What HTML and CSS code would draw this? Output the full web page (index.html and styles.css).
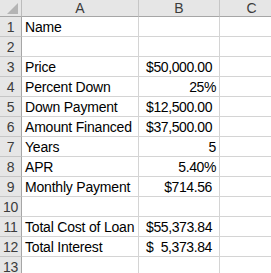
FILE: index.html
```html
<!DOCTYPE html>
<html>
<head>
<meta charset="utf-8">
<link rel="stylesheet" href="styles.css">
</head>
<body>
<div class="sheet">
  <div class="corner"><span class="tri"></span></div>
  <div class="colhdr">A</div>
  <div class="colhdr">B</div>
  <div class="colhdr">C</div>

  <div class="rowhdr">1</div><div class="cell">Name</div><div class="cell"></div><div class="cell"></div>
  <div class="rowhdr">2</div><div class="cell"></div><div class="cell"></div><div class="cell"></div>
  <div class="rowhdr">3</div><div class="cell">Price</div><div class="cell acct"><span>$</span><span>50,000.00</span></div><div class="cell"></div>
  <div class="rowhdr">4</div><div class="cell">Percent Down</div><div class="cell num">25%</div><div class="cell"></div>
  <div class="rowhdr">5</div><div class="cell">Down Payment</div><div class="cell acct"><span>$</span><span>12,500.00</span></div><div class="cell"></div>
  <div class="rowhdr">6</div><div class="cell">Amount Financed</div><div class="cell acct"><span>$</span><span>37,500.00</span></div><div class="cell"></div>
  <div class="rowhdr">7</div><div class="cell">Years</div><div class="cell num">5</div><div class="cell"></div>
  <div class="rowhdr">8</div><div class="cell">APR</div><div class="cell num">5.40%</div><div class="cell"></div>
  <div class="rowhdr">9</div><div class="cell">Monthly Payment</div><div class="cell num curr">$714.56</div><div class="cell"></div>
  <div class="rowhdr">10</div><div class="cell"></div><div class="cell"></div><div class="cell"></div>
  <div class="rowhdr">11</div><div class="cell">Total Cost of Loan</div><div class="cell acct"><span>$</span><span>55,373.84</span></div><div class="cell"></div>
  <div class="rowhdr">12</div><div class="cell">Total Interest</div><div class="cell acct"><span>$</span><span>5,373.84</span></div><div class="cell"></div>
  <div class="rowhdr">13</div><div class="cell"></div><div class="cell"></div><div class="cell"></div>
</div>
</body>
</html>
```
FILE: styles.css
```css
html, body {
  margin: 0;
  padding: 0;
  background: #ffffff;
  overflow: hidden;
}

.sheet {
  display: grid;
  grid-template-columns: 22px 117px 81px 64px;
  grid-template-rows: 17px repeat(13, 20px);
  font-family: "Liberation Sans", Arial, sans-serif;
  font-size: 14px;
  color: #000000;
}

.sheet > div {
  box-sizing: border-box;
  border-right: 1px solid #d4d4d4;
  border-bottom: 1px solid #d4d4d4;
  white-space: nowrap;
  overflow: visible;
}

.corner {
  background: #e6e6e6;
  position: relative;
  border-right-color: #bcbcbc !important;
  border-bottom-color: #a6a6a6 !important;
}

.tri {
  position: absolute;
  right: 3px;
  bottom: 2px;
  width: 0;
  height: 0;
  border-left: 11px solid transparent;
  border-bottom: 11px solid #b4b4b4;
}

.colhdr {
  background: #e6e6e6;
  color: #3c3c3c;
  display: flex;
  align-items: center;
  justify-content: center;
  line-height: 15px;
  border-right-color: #c6c6c6 !important;
  border-bottom-color: #a6a6a6 !important;
}

.rowhdr {
  background: #e6e6e6;
  color: #3c3c3c;
  display: flex;
  align-items: flex-end;
  justify-content: center;
  line-height: 15px;
  padding-bottom: 1px;
  letter-spacing: -0.3px;
  border-right-color: #a6a6a6 !important;
  border-bottom-color: #c6c6c6 !important;
}

.cell {
  display: flex;
  align-items: flex-end;
  line-height: 15px;
  padding: 0 3px 1px 3px;
  letter-spacing: -0.2px;
}

.num {
  justify-content: flex-end;
  letter-spacing: -0.4px;
}

.curr {
  padding-right: 7px;
}

.acct {
  justify-content: space-between;
  padding-left: 7px;
  padding-right: 7px;
  letter-spacing: -0.4px;
}
```
